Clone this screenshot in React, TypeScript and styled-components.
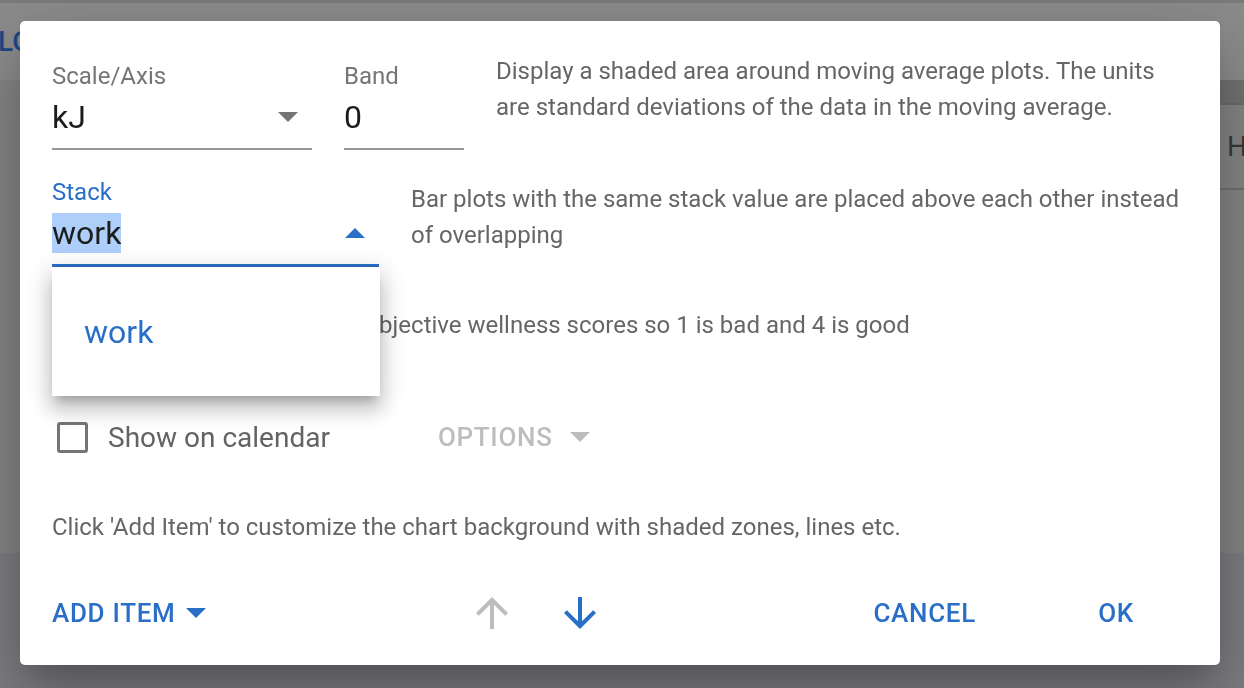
import React from "react";
import styled, { createGlobalStyle } from "styled-components";

const BLUE = "#2a6fc7";

const GlobalStyle = createGlobalStyle`
  html, body { margin: 0; padding: 0; }
  body { font-family: Roboto, "Liberation Sans", sans-serif; overflow: hidden; }
  * { box-sizing: border-box; }
`;

/* ---------- dimmed application behind the dialog ---------- */
const Page = styled.div`
  width: 1244px;
  height: 688px;
  display: flex;
  flex-direction: column;
  overflow: hidden;
  background: #868686;
`;
const AppBar = styled.header`
  height: 80px;
  background: #8c8c8c;
  border-top: 3px solid #7b7b7b;
  display: flex;
  align-items: center;
`;
const BarLink = styled.span`
  font: 500 28px Roboto, "Liberation Sans", sans-serif;
  color: #1d4786;
  margin-left: -2px;
`;
const Workspace = styled.main`
  flex: 1;
  display: flex;
  justify-content: flex-end;
  background: #868686;
`;
const SideTable = styled.div`
  width: 24px;
  display: flex;
  flex-direction: column;
`;
const TableHead = styled.div`
  height: 25px;
  background: #727272;
  border-bottom: 2px solid #6c6c6c;
`;
const TableRow = styled.div`
  height: 85px;
  border-bottom: 2px solid #707070;
  display: flex;
  align-items: center;
  padding-left: 7px;
  font: 28px Roboto, "Liberation Sans", sans-serif;
  color: #393939;
`;
const Footer = styled.footer`
  height: 135px;
  background: #7e7e82;
`;

/* ---------- dialog ---------- */
const Backdrop = styled.div`
  position: fixed;
  inset: 0;
  display: flex;
  align-items: center;
  justify-content: center;
  padding: 0 4px 2px 0;
`;
const Dialog = styled.div`
  width: 1200px;
  background: #fff;
  border-radius: 5px;
  padding: 32px 32px 24px 32px;
  display: flex;
  flex-direction: column;
  box-shadow: 0 19px 26px -12px rgba(0, 0, 0, 0.2),
    0 42px 66px 5px rgba(0, 0, 0, 0.14), 0 16px 80px 14px rgba(0, 0, 0, 0.12);
`;
const FormRow = styled.div<{ $mt?: number }>`
  display: flex;
  align-items: flex-start;
  gap: 32px;
  margin-top: ${(p) => p.$mt ?? 0}px;
`;
const Field = styled.div<{ $width: number; $top?: number }>`
  position: relative;
  width: ${(p) => p.$width}px;
  flex: none;
  margin-top: ${(p) => p.$top ?? 0}px;
`;
const FieldLabel = styled.div<{ $focused?: boolean }>`
  font-size: 24px;
  line-height: 24px;
  color: ${(p) => (p.$focused ? BLUE : "#767676")};
`;
const InputBox = styled.div<{ $focused?: boolean }>`
  display: flex;
  align-items: center;
  justify-content: space-between;
  padding: 9px 0 11px 0;
  font-size: 32px;
  line-height: 40px;
  color: #1c1c1c;
  border-bottom: ${(p) => (p.$focused ? `3px solid ${BLUE}` : "2px solid #979797")};
`;
const Selected = styled.span`
  background: #adcff9;
`;
const Caret = styled.svg<{ $color: string }>`
  width: 20px;
  height: 10px;
  margin-right: 14px;
  flex: none;
  fill: ${(p) => p.$color};
`;
const Description = styled.p<{ $top?: number; $indent?: number }>`
  margin: ${(p) => p.$top ?? 0}px 0 0 ${(p) => p.$indent ?? 0}px;
  font-size: 24px;
  line-height: 36px;
  color: #666;
  flex: 1;
`;
const Menu = styled.ul`
  position: absolute;
  top: 100%;
  left: 0;
  width: 328px;
  margin: 0;
  padding: 14px 0;
  list-style: none;
  background: #fff;
  z-index: 2;
  box-shadow: 0 9px 9px -5px rgba(0, 0, 0, 0.2), 0 14px 18px 2px rgba(0, 0, 0, 0.14),
    0 5px 24px 4px rgba(0, 0, 0, 0.12);
`;
const MenuItem = styled.li`
  height: 101px;
  display: flex;
  align-items: center;
  padding-left: 32px;
  font-size: 32px;
  color: ${BLUE};
`;
const CheckRow = styled.div<{ $mt: number }>`
  display: flex;
  align-items: center;
  height: 42px;
  margin-top: ${(p) => p.$mt}px;
`;
const CheckBox = styled.span`
  width: 31px;
  height: 31px;
  margin-left: 5px;
  border: 3.5px solid #757575;
  border-radius: 3px;
  flex: none;
`;
const CheckLabel = styled.span`
  margin-left: 20px;
  font-size: 28px;
  color: #636363;
`;
const HiddenLead = styled.div`
  width: 203px;
  display: flex;
  align-items: center;
  flex: none;
`;
const TextButton = styled.button<{ $color: string; $min?: number }>`
  display: inline-flex;
  align-items: center;
  justify-content: center;
  min-width: ${(p) => p.$min ?? 0}px;
  height: 56px;
  padding: 0 ${(p) => (p.$min ? 14 : 0)}px;
  border: none;
  background: none;
  font: 500 26px Roboto, "Liberation Sans", sans-serif;
  letter-spacing: 0.7px;
  text-transform: uppercase;
  color: ${(p) => p.$color};
  cursor: pointer;
`;
const ButtonCaret = styled(Caret)<{ $gap: number }>`
  margin: 0 0 0 ${(p) => p.$gap}px;
`;
const OptionsButton = styled(TextButton)`
  margin-left: 108px;
`;
const Note = styled.p`
  margin: 51px 0 0 0;
  font-size: 24px;
  line-height: 36px;
  color: #666;
`;
const Actions = styled.div`
  display: flex;
  align-items: center;
  height: 56px;
  margin-top: 40px;
`;
const ArrowGroup = styled.div`
  display: flex;
  margin-left: 242px;
`;
const IconButton = styled.button<{ $color: string }>`
  width: 88px;
  height: 56px;
  border: none;
  background: none;
  padding: 0;
  display: flex;
  align-items: center;
  justify-content: center;
  color: ${(p) => p.$color};
  svg {
    width: 48px;
    height: 48px;
    fill: currentColor;
  }
`;
const ActionEnd = styled.div`
  margin-left: auto;
  margin-right: 16px;
  display: flex;
  gap: 70px;
`;

const DownCaret = ({ color }: { color: string }) => (
  <Caret $color={color} viewBox="0 0 20 10">
    <polygon points="0,0 20,0 10,10" />
  </Caret>
);
const UpCaret = ({ color }: { color: string }) => (
  <Caret $color={color} viewBox="0 0 20 10">
    <polygon points="0,10 20,10 10,0" />
  </Caret>
);

export default function App() {
  return (
    <>
      <GlobalStyle />
      <Page>
        <AppBar>
          <BarLink>LOGS</BarLink>
        </AppBar>
        <Workspace>
          <SideTable>
            <TableHead />
            <TableRow>H</TableRow>
          </SideTable>
        </Workspace>
        <Footer />
      </Page>
      <Backdrop>
        <Dialog>
          <FormRow>
            <Field $width={260} $top={11}>
              <FieldLabel>Scale/Axis</FieldLabel>
              <InputBox>
                <span>kJ</span>
                <DownCaret color="#757575" />
              </InputBox>
            </Field>
            <Field $width={120} $top={11}>
              <FieldLabel>Band</FieldLabel>
              <InputBox>
                <span>0</span>
              </InputBox>
            </Field>
            <Description>
              Display a shaded area around moving average plots. The units are standard
              deviations of the data in the moving average.
            </Description>
          </FormRow>
          <FormRow $mt={30}>
            <Field $width={327}>
              <FieldLabel $focused>Stack</FieldLabel>
              <InputBox $focused>
                <Selected>work</Selected>
                <UpCaret color={BLUE} />
              </InputBox>
              <Menu>
                <MenuItem>work</MenuItem>
              </Menu>
            </Field>
            <Description $top={1}>
              Bar plots with the same stack value are placed above each other instead of
              overlapping
            </Description>
          </FormRow>
          <CheckRow $mt={37}>
            <HiddenLead>
              <CheckBox />
              <CheckLabel>Invert</CheckLabel>
            </HiddenLead>
            <Description $indent={32}>
              Invert subjective wellness scores so 1 is bad and 4 is good
            </Description>
          </CheckRow>
          <CheckRow $mt={70}>
            <CheckBox />
            <CheckLabel>Show on calendar</CheckLabel>
            <OptionsButton $color="#bdbdbd">
              Options
              <ButtonCaret $gap={17} $color="#bdbdbd" viewBox="0 0 20 10">
                <polygon points="0,0 20,0 10,10" />
              </ButtonCaret>
            </OptionsButton>
          </CheckRow>
          <Note>
            Click 'Add Item' to customize the chart background with shaded zones, lines etc.
          </Note>
          <Actions>
            <TextButton $color={BLUE}>
              Add Item
              <ButtonCaret $gap={10} $color={BLUE} viewBox="0 0 20 10">
                <polygon points="0,0 20,0 10,10" />
              </ButtonCaret>
            </TextButton>
            <ArrowGroup>
              <IconButton $color="#bdbdbd" aria-label="move up">
                <svg viewBox="0 0 24 24">
                  <path d="M4 12l1.41 1.41L11 7.83V20h2V7.83l5.58 5.59L20 12l-8-8-8 8z" />
                </svg>
              </IconButton>
              <IconButton $color={BLUE} aria-label="move down">
                <svg viewBox="0 0 24 24">
                  <path d="M20 12l-1.41-1.41L13 16.17V4h-2v12.17l-5.58-5.59L4 12l8 8 8-8z" />
                </svg>
              </IconButton>
            </ArrowGroup>
            <ActionEnd>
              <TextButton $color={BLUE} $min={112}>
                Cancel
              </TextButton>
              <TextButton $color={BLUE} $min={112}>
                OK
              </TextButton>
            </ActionEnd>
          </Actions>
        </Dialog>
      </Backdrop>
    </>
  );
}
